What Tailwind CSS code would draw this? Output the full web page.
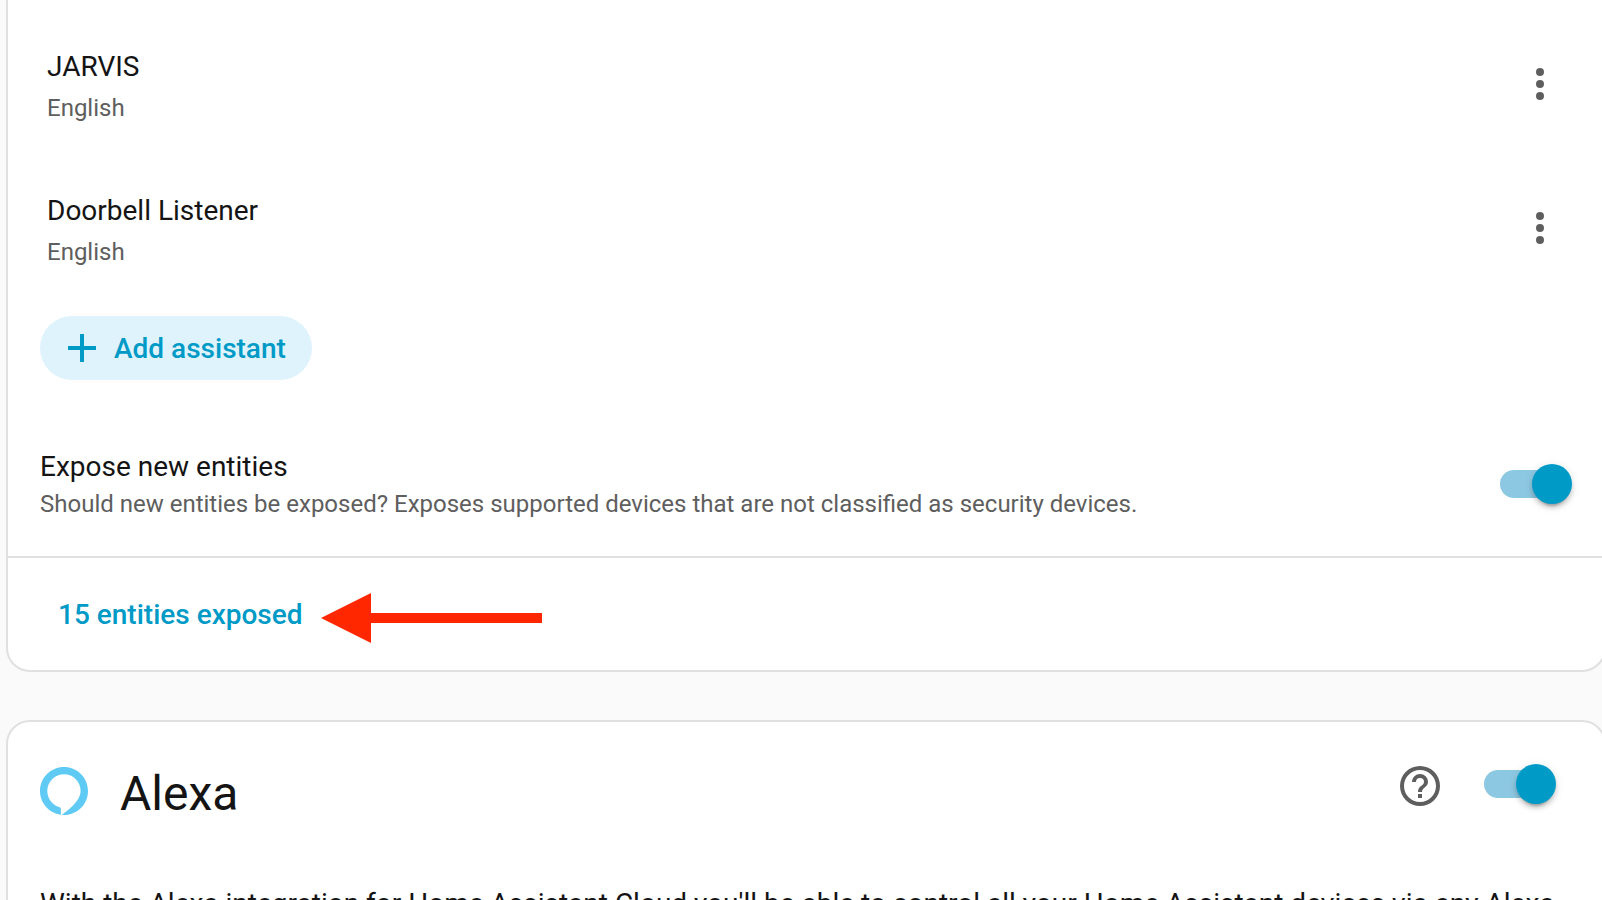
<!DOCTYPE html>
<html lang="en">
<head>
<meta charset="utf-8">
<title>Voice assistants</title>
<script src="https://cdn.jsdelivr.net/npm/@tailwindcss/browser@4"></script>
</head>
<body class="h-screen overflow-hidden bg-[#fafafa] font-['Roboto',sans-serif] text-[28px] leading-8 text-[#141414]">
<main class="-mr-1 flex flex-col gap-12 pl-1.5">
  <section class="rounded-b-3xl border-2 border-t-0 border-[#e0e0e0] bg-white" aria-label="Assist">
    <ul class="pt-3">
      <li class="flex h-36 items-center justify-between pr-10 pl-[39px]">
        <div class="flex flex-col gap-[9px] pt-[7px]">
          <h2>JARVIS</h2>
          <p class="text-2xl leading-8 text-[#5e5e5e]">English</p>
        </div>
        <button type="button" aria-label="JARVIS options" class="text-[#5e5e5e]">
          <svg class="size-12" viewBox="0 0 24 24" fill="currentColor"><path d="M12 16a2 2 0 0 1 2 2 2 2 0 0 1-2 2 2 2 0 0 1-2-2 2 2 0 0 1 2-2m0-6a2 2 0 0 1 2 2 2 2 0 0 1-2 2 2 2 0 0 1-2-2 2 2 0 0 1 2-2m0-6a2 2 0 0 1 2 2 2 2 0 0 1-2 2 2 2 0 0 1-2-2 2 2 0 0 1 2-2Z"/></svg>
        </button>
      </li>
      <li class="flex h-36 items-center justify-between pr-10 pl-[39px]">
        <div class="flex flex-col gap-[9px] pt-[7px]">
          <h2>Doorbell Listener</h2>
          <p class="text-2xl leading-8 text-[#5e5e5e]">English</p>
        </div>
        <button type="button" aria-label="Doorbell Listener options" class="text-[#5e5e5e]">
          <svg class="size-12" viewBox="0 0 24 24" fill="currentColor"><path d="M12 16a2 2 0 0 1 2 2 2 2 0 0 1-2 2 2 2 0 0 1-2-2 2 2 0 0 1 2-2m0-6a2 2 0 0 1 2 2 2 2 0 0 1-2 2 2 2 0 0 1-2-2 2 2 0 0 1 2-2m0-6a2 2 0 0 1 2 2 2 2 0 0 1-2 2 2 2 0 0 1-2-2 2 2 0 0 1 2-2Z"/></svg>
        </button>
      </li>
    </ul>
    <div class="px-8 pt-4">
      <button type="button" class="flex h-16 items-center gap-[18px] rounded-full bg-[#dff3fc] pr-[26px] pl-7 font-medium text-[#009ac7]">
        <svg class="size-7" viewBox="5 5 14 14" fill="currentColor"><path d="M19 13h-6v6h-2v-6H5v-2h6V5h2v6h6z"/></svg>
        <span class="pt-0.5">Add assistant</span>
      </button>
    </div>
    <div class="mt-8 flex h-36 items-center justify-between px-8">
      <label for="expose" class="flex flex-col gap-[5px] pt-[3px]">
        <span>Expose new entities</span>
        <span class="text-2xl leading-8 text-[#5e5e5e]">Should new entities be exposed? Exposes supported devices that are not classified as security devices.</span>
      </label>
      <input id="expose" type="checkbox" checked class="relative h-10 w-[72px] shrink-0 appearance-none before:absolute before:top-1.5 before:left-0 before:h-7 before:w-16 before:rounded-full before:bg-[#8dc8e2] after:absolute after:top-0 after:right-0 after:size-10 after:rounded-full after:bg-[#009ac7] after:shadow-[0_6px_2px_-4px_rgb(0_0_0/0.2),0_4px_4px_rgb(0_0_0/0.14),0_2px_10px_rgb(0_0_0/0.12)]">
    </div>
    <footer class="flex h-[114px] items-center gap-[18px] border-t-2 border-[#e0e0e0] pl-[50px]">
      <a href="#entities" class="pt-0.5 font-medium text-[#009ac7]">15 entities exposed</a>
      <svg class="mt-2 h-[50px] w-[221px]" viewBox="0 0 221 50" fill="#ff2700" aria-hidden="true"><path d="M0 25 50 0v20h171v10H50v20z"/></svg>
    </footer>
  </section>

  <section class="rounded-3xl border-2 border-[#e0e0e0] bg-white px-8 pt-7 pb-8" aria-label="Alexa">
    <header class="flex items-center pr-4">
      <svg class="mt-0.5 size-12" viewBox="0 0 48 48" fill="#5fcaf4" aria-hidden="true"><path d="M24 0C10.700 0 0 10.700 0 24c0 12 9 22 20.900 23.800V42c0-.8-.5-1.500-1.300-1.700C12.600 38.200 7.300 31.600 7.300 23.700 7.400 14.600 14.900 7.200 24.100 7.200c9.200 0 16.600 7.500 16.500 16.700C40.500 36 22 47 22 47.900c.7.1 1.300.1 2 .1 13.300 0 24-10.700 24-24S37.300 0 24 0Z"/></svg>
      <h1 class="grow pt-2 pl-8 text-5xl leading-[72px]">Alexa</h1>
      <a href="#help" aria-label="Help" class="-mt-2 mr-10 text-[#5e5e5e]">
        <svg class="size-12" viewBox="0 0 24 24" fill="currentColor"><path d="M11 18h2v-2h-2v2m1-16A10 10 0 0 0 2 12a10 10 0 0 0 10 10 10 10 0 0 0 10-10A10 10 0 0 0 12 2m0 18c-4.410 0-8-3.590-8-8s3.590-8 8-8 8 3.590 8 8-3.590 8-8 8m0-14a4 4 0 0 0-4 4h2a2 2 0 0 1 2-2 2 2 0 0 1 2 2c0 2-3 1.750-3 5h2c0-2.250 3-2.500 3-5a4 4 0 0 0-4-4Z"/></svg>
      </a>
      <input type="checkbox" checked aria-label="Enable Alexa" class="relative -mt-3 h-10 w-[72px] shrink-0 appearance-none before:absolute before:top-1.5 before:left-0 before:h-7 before:w-16 before:rounded-full before:bg-[#8dc8e2] after:absolute after:top-0 after:right-0 after:size-10 after:rounded-full after:bg-[#009ac7] after:shadow-[0_6px_2px_-4px_rgb(0_0_0/0.2),0_4px_4px_rgb(0_0_0/0.14),0_2px_10px_rgb(0_0_0/0.12)]">
    </header>
    <p class="mt-[54px] leading-10">With the Alexa integration for Home Assistant Cloud you'll be able to control all your Home Assistant devices via any Alexa-enabled device.</p>
  </section>
</main>
</body>
</html>
